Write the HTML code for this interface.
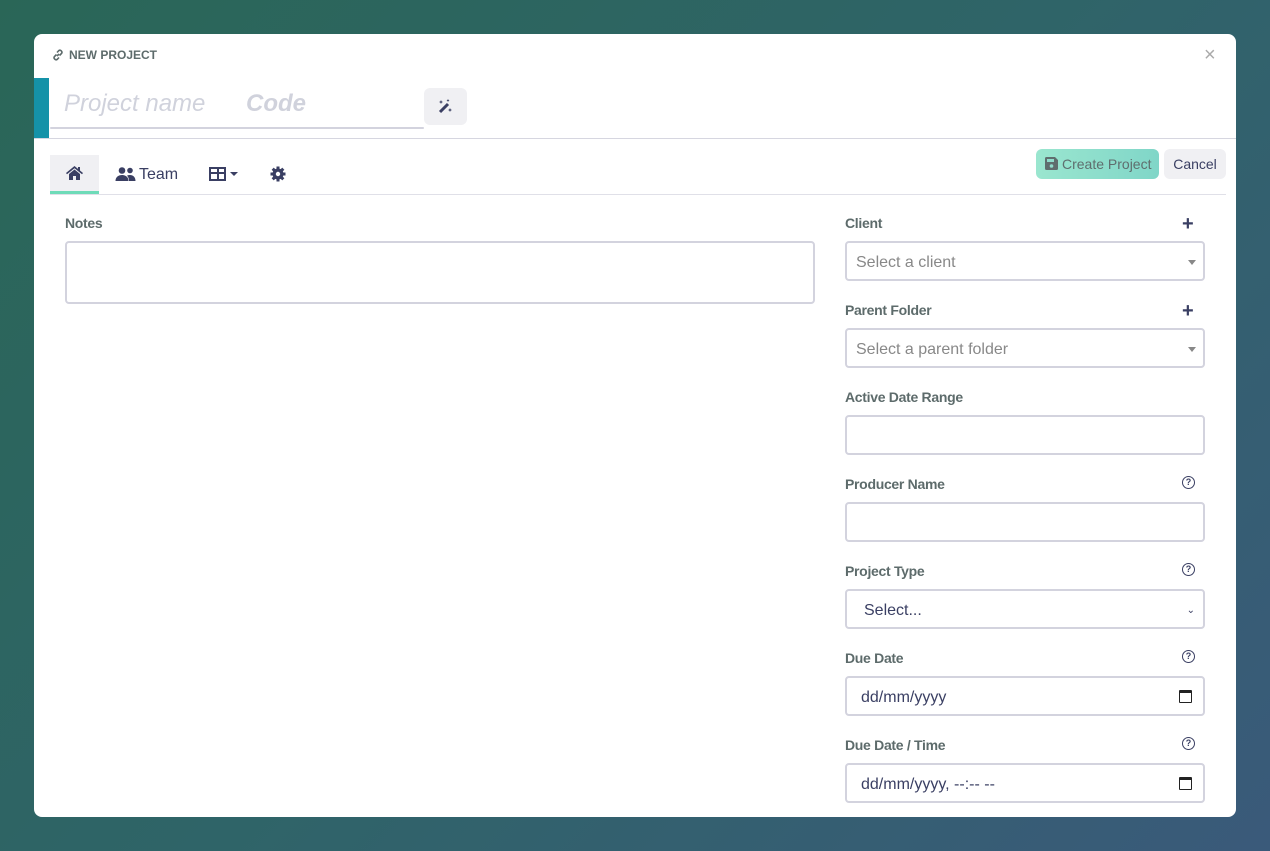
<!DOCTYPE html>
<html><head><style>
*{box-sizing:border-box;margin:0;padding:0}
body{width:1270px;height:851px;overflow:hidden;background:linear-gradient(135deg,#2a6657 0%,#2f6468 50%,#3a5a7a 100%);font-family:"Liberation Sans",sans-serif;position:relative}
.modal{position:absolute;left:34px;top:34px;width:1202px;height:783px;background:#fff;border-radius:8px;overflow:hidden}
.abs{position:absolute}
.lbl{position:absolute;font-size:14px;font-weight:bold;color:#5d6b6b;letter-spacing:-0.3px}
.inp{position:absolute;left:811px;width:360px;height:40px;border:2px solid #d3d3de;border-radius:4px;font-size:16px;color:#3a3f63;padding-left:9px;line-height:40px}
.ph{color:#888}
.caret{position:absolute;right:7px;top:17px;border:4px solid transparent;border-top:5px solid #888;border-bottom:0}
.q{position:absolute;left:1148px;width:13px;height:13px;border:1.5px solid #3a3f63;border-radius:50%;font-size:9px;font-weight:bold;color:#3a3f63;text-align:center;line-height:10px}
.plus{position:absolute;left:1148px;font-size:20px;font-weight:bold;color:#3a3f63}
.cal{position:absolute;right:11px;top:12px;width:13px;height:13px;border:1.5px solid #222;border-top-width:3px;border-radius:1px}
</style></head><body>
<div class="modal">
<svg class="abs" style="left:18px;top:15px" width="12" height="12" viewBox="0 0 12 12" fill="none" stroke="#5d6b6b" stroke-width="1.6"><path d="M5 7L7 5M4.5 5.5L2.5 7.5a2 2 0 0 0 2.8 2.8L7 8.5M7.5 6.5L9.5 4.5a2 2 0 0 0-2.8-2.8L5 3.5"/></svg>
<div class="abs" style="left:35px;top:14px;font-size:12px;font-weight:bold;color:#5d6b6b">NEW PROJECT</div>
<div class="abs" style="left:1170px;top:10px;font-size:20px;color:#aaa">×</div>
<div class="abs" style="left:0;top:44px;width:15px;height:60px;background:#1592a8"></div>
<div class="abs" style="left:30px;top:56px;font-size:24px;font-style:italic;color:#d0d2dc">Project name</div>
<div class="abs" style="left:212px;top:56px;font-size:24px;font-style:italic;font-weight:bold;color:#d0d2dc">Code</div>
<div class="abs" style="left:16px;top:93px;width:374px;height:2px;background:#d3d3de;border-radius:1px"></div>
<div class="abs" style="left:390px;top:54px;width:43px;height:37px;background:#f0f0f3;border-radius:6px"></div>
<svg class="abs" style="left:403px;top:64px" width="17" height="17" viewBox="0 0 17 17"><path d="M3 14L11 6" stroke="#3a3f63" stroke-width="3"/><path d="M4 2l.6 1.4L6 4l-1.4.6L4 6l-.6-1.4L2 4l1.4-.6zM13 10l.6 1.4 1.4.6-1.4.6L13 14l-.6-1.4L11 12l1.4-.6zM11 1l.5 1 1 .5-1 .5-.5 1-.5-1-1-.5 1-.5z" fill="#3a3f63"/></svg>
<div class="abs" style="left:0;top:104px;width:1202px;height:1px;background:#d6d6e0"></div>
<div class="abs" style="left:16px;top:121px;width:49px;height:39px;background:#f0f0f3;border-bottom:3px solid #6edbb8"></div>
<svg class="abs" style="left:31px;top:131px" width="19" height="16" viewBox="0 0 19 16"><path d="M9.5 1L1 8l1 1.2 7.5-6 7.5 6L18 8z" fill="#3a3f63"/><path d="M4 9l5.5-4.5L15 9v6h-4v-4H8v4H4z" fill="#3a3f63"/><rect x="13" y="2" width="2" height="4" fill="#3a3f63"/></svg>
<svg class="abs" style="left:81px;top:133px" width="21" height="14" viewBox="0 0 21 14" fill="#3a3f63"><circle cx="7" cy="3.5" r="3.3"/><circle cx="15" cy="3.5" r="2.8"/><path d="M0.5 14c0-4 3-6 6.5-6s6.5 2 6.5 6zM14 14c0-2-.5-4-2-5.3 1-.5 2-.7 3-.7 3 0 5.5 2 5.5 6z"/></svg>
<div class="abs" style="left:105px;top:132px;font-size:16px;color:#3a3f63">Team</div>
<div class="abs" style="left:175px;top:133px;width:17px;height:14px;border:2px solid #3a3f63;background:linear-gradient(#3a3f63,#3a3f63) 0 3px/100% 2px no-repeat,linear-gradient(#3a3f63,#3a3f63) 6px 0/2px 100% no-repeat"></div>
<div class="abs" style="left:196px;top:138px;border:4px solid transparent;border-top:4px solid #3a3f63"></div>
<svg class="abs" style="left:236px;top:132px" width="16" height="16" viewBox="0 0 16 16"><g fill="#3a3f63"><circle cx="8" cy="8" r="5.5"/><rect x="6.5" y="0.5" width="3" height="15"/><rect x="0.5" y="6.5" width="15" height="3"/><rect x="6.5" y="0.5" width="3" height="15" transform="rotate(45 8 8)"/><rect x="6.5" y="0.5" width="3" height="15" transform="rotate(-45 8 8)"/></g><circle cx="8" cy="8" r="2.2" fill="#fff"/></svg>
<div class="abs" style="left:16px;top:160px;width:1176px;height:1px;background:#e0e0e8"></div>
<div class="abs" style="left:1002px;top:115px;width:123px;height:30px;border-radius:6px;background:linear-gradient(90deg,#9ae6cf,#80d6c8);color:#5f6e6e;font-size:14px;line-height:30px;padding-left:26px">Create Project</div>
<svg class="abs" style="left:1011px;top:123px" width="13" height="13" viewBox="0 0 13 13"><path d="M0 1.5A1.5 1.5 0 0 1 1.5 0H10l3 3v8.5a1.5 1.5 0 0 1-1.5 1.5h-10A1.5 1.5 0 0 1 0 11.5z" fill="#5f6e6e"/><rect x="2" y="2" width="7" height="3" fill="#8fdccb"/><circle cx="6.5" cy="9" r="1.8" fill="#8fdccb"/></svg>
<div class="abs" style="left:1130px;top:115px;width:62px;height:30px;border-radius:6px;background:#f0f0f3;color:#3a3f63;font-size:14px;line-height:30px;text-align:center">Cancel</div>
<div class="lbl" style="left:31px;top:181px">Notes</div>
<div class="abs" style="left:31px;top:207px;width:750px;height:63px;border:2px solid #d3d3de;border-radius:4px"></div>
<div class="lbl" style="left:811px;top:181px">Client</div><div class="plus" style="top:179px">+</div>
<div class="inp" style="top:207px"><span class="ph">Select a client</span><div class="caret"></div></div>
<div class="lbl" style="left:811px;top:268px">Parent Folder</div><div class="plus" style="top:266px">+</div>
<div class="inp" style="top:294px"><span class="ph">Select a parent folder</span><div class="caret"></div></div>
<div class="lbl" style="left:811px;top:355px">Active Date Range</div>
<div class="inp" style="top:381px"></div>
<div class="lbl" style="left:811px;top:442px">Producer Name</div><div class="q" style="top:442px">?</div>
<div class="inp" style="top:468px"></div>
<div class="lbl" style="left:811px;top:529px">Project Type</div><div class="q" style="top:529px">?</div>
<div class="inp" style="top:555px;padding-left:17px">Select...<span style="position:absolute;right:8px;top:0;font-size:10px">⌄</span></div>
<div class="lbl" style="left:811px;top:616px">Due Date</div><div class="q" style="top:616px">?</div>
<div class="inp" style="top:642px;padding-left:14px">dd/mm/yyyy<div class="cal"></div></div>
<div class="lbl" style="left:811px;top:703px">Due Date / Time</div><div class="q" style="top:703px">?</div>
<div class="inp" style="top:729px;padding-left:14px">dd/mm/yyyy, --:-- --<div class="cal"></div></div>
</div>
</body></html>
